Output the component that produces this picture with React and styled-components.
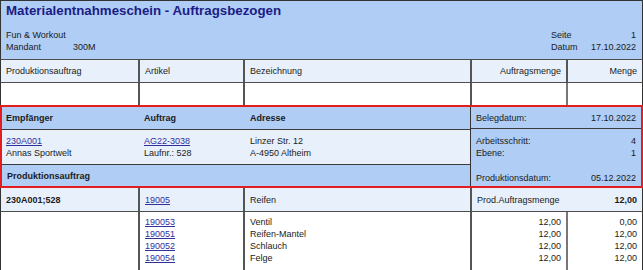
import React from 'react';
import styled, { createGlobalStyle } from 'styled-components';

const GlobalStyle = createGlobalStyle`
  html, body {
    margin: 0;
    padding: 0;
    background: #ffffff;
  }
  * {
    box-sizing: border-box;
  }
`;

const COLS = '139px 105px 227px 96px 74px';

const Sheet = styled.div`
  width: 643px;
  font-family: 'Liberation Sans', Arial, sans-serif;
  font-size: 9px;
  line-height: 12px;
  color: #1b1b1b;
`;

const Header = styled.header`
  height: 59px;
  padding: 2px 6px 0 5px;
  background: #afcdf5;
  border: 1px solid #333;
  border-bottom: none;
`;

const Title = styled.h1`
  margin: 0;
  font-size: 13.3px;
  line-height: 16px;
  font-weight: 700;
  color: #1c1c84;
`;

const InfoRow = styled.div`
  display: flex;
  justify-content: space-between;
  margin-top: 10px;
`;

const InfoGrid = styled.div`
  display: grid;
  grid-template-columns: ${p => p.$cols};
  width: ${p => p.$width || 'auto'};

  & > span:nth-child(2n) {
    text-align: ${p => (p.$alignValue === 'right' ? 'right' : 'left')};
  }
`;

const Row = styled.div`
  display: grid;
  grid-template-columns: ${COLS};
  height: ${p => p.$h}px;
  background: ${p => p.$bg || '#ffffff'};
  border-left: 1px solid #333;
  border-right: 1px solid #333;
  border-top: ${p => (p.$top ? '1px solid #4d4d4d' : 'none')};
  border-bottom: ${p => (p.$bottom ? '1px solid #4d4d4d' : 'none')};
`;

const Cell = styled.div`
  display: flex;
  flex-direction: column;
  justify-content: ${p => (p.$stack ? 'flex-start' : 'center')};
  align-items: ${p => (p.$right ? 'flex-end' : 'flex-start')};
  padding: ${p => (p.$stack ? '4px 5px 0' : '0 5px')};
  border-right: ${p => (p.$line ? `2px solid ${p.$lineColor || '#555'}` : 'none')};
  grid-column: ${p => (p.$span ? `span ${p.$span}` : 'auto')};
  font-weight: ${p => (p.$bold ? 700 : 400)};
`;

const SplitCell = styled(Cell)`
  flex-direction: row;
  justify-content: space-between;
  align-items: center;
`;

const Link = styled.a`
  color: #30309c;
  text-decoration: underline;
`;

const Strong = styled.span`
  font-weight: 700;
`;

/* red framed order block */
const OrderBox = styled.div`
  display: grid;
  grid-template-columns: 469px 1fr;
  height: 83px;
  border: 2px solid #e41e1e;
`;

const OrderLeft = styled.div`
  display: grid;
  grid-template-rows: 23px 35px 1fr;
  border-right: 1px solid #333;
`;

const OrderRow = styled.div`
  display: grid;
  grid-template-columns: 138px 105px 1fr;
  align-items: ${p => (p.$top ? 'start' : 'center')};
  padding-top: ${p => (p.$top ? '5px' : '0')};
  background: ${p => (p.$light ? '#e8f0fc' : '#afcdf5')};
  border-bottom: ${p => (p.$line ? '1px solid #3c3c3c' : 'none')};
  font-weight: ${p => (p.$bold ? 700 : 400)};

  & > div {
    padding-left: 4px;
  }
  & > div:last-child {
    padding-left: 5px;
  }
`;

const OrderRight = styled.div`
  display: grid;
  grid-template-rows: 22px 1fr;
  background: #afcdf5;
`;

const MetaLine = styled.div`
  display: flex;
  justify-content: space-between;
  align-items: center;
  padding: 0 5px 0 5px;
  border-bottom: ${p => (p.$line ? '1px solid #3c3c3c' : 'none')};
`;

const MetaBlock = styled.div`
  display: flex;
  flex-direction: column;
  justify-content: space-between;
  padding: 6px 5px 2px;
`;

const Pair = styled.div`
  display: flex;
  justify-content: space-between;
`;

const items = [
  { nr: '190053', name: 'Ventil', soll: '12,00', ist: '0,00' },
  { nr: '190051', name: 'Reifen-Mantel', soll: '12,00', ist: '12,00' },
  { nr: '190052', name: 'Schlauch', soll: '12,00', ist: '12,00' },
  { nr: '190054', name: 'Felge', soll: '12,00', ist: '12,00' },
];

const App = () => {
  return (
    <Sheet>
      <GlobalStyle />
      <Header>
        <Title>Materialentnahmeschein - Auftragsbezogen</Title>
        <InfoRow>
          <InfoGrid $cols="67px auto">
            <span>Fun &amp; Workout</span>
            <span />
            <span>Mandant</span>
            <span>300M</span>
          </InfoGrid>
          <InfoGrid $cols="1fr auto" $width="85px" $alignValue="right">
            <span>Seite</span>
            <span>1</span>
            <span>Datum</span>
            <span>17.10.2022</span>
          </InfoGrid>
        </InfoRow>
      </Header>

      <Row $h={24} $bg="#e8f0fc" $top $bottom>
        <Cell $line>Produktionsauftrag</Cell>
        <Cell $line>Artikel</Cell>
        <Cell $line>Bezeichnung</Cell>
        <Cell $line $right>Auftragsmenge</Cell>
        <Cell $right>Menge</Cell>
      </Row>
      <Row $h={22}>
        <Cell $line />
        <Cell $line />
        <Cell $line />
        <Cell $line $lineColor="#777" />
        <Cell />
      </Row>

      <OrderBox>
        <OrderLeft>
          <OrderRow $line $bold>
            <div>Empfänger</div>
            <div>Auftrag</div>
            <div>Adresse</div>
          </OrderRow>
          <OrderRow $line $light $top>
            <div>
              <Link href="#">230A001</Link>
              <br />
              Annas Sportwelt
            </div>
            <div>
              <Link href="#">AG22-3038</Link>
              <br />
              Laufnr.: 528
            </div>
            <div>
              Linzer Str. 12
              <br />
              A-4950 Altheim
            </div>
          </OrderRow>
          <OrderRow $bold>
            <div>Produktionsauftrag</div>
          </OrderRow>
        </OrderLeft>
        <OrderRight>
          <MetaLine $line>
            <span>Belegdatum:</span>
            <span>17.10.2022</span>
          </MetaLine>
          <MetaBlock>
            <div>
              <Pair>
                <span>Arbeitsschritt:</span>
                <span>4</span>
              </Pair>
              <Pair>
                <span>Ebene:</span>
                <span>1</span>
              </Pair>
            </div>
            <Pair>
              <span>Produktionsdatum:</span>
              <span>05.12.2022</span>
            </Pair>
          </MetaBlock>
        </OrderRight>
      </OrderBox>

      <Row $h={24} $bg="#e8f0fc" $bottom>
        <Cell $line $bold>230A001;528</Cell>
        <Cell $line>
          <Link href="#">19005</Link>
        </Cell>
        <Cell $line>Reifen</Cell>
        <SplitCell $span={2}>
          <span>Prod.Auftragsmenge</span>
          <Strong>12,00</Strong>
        </SplitCell>
      </Row>

      <Row $h={72}>
        <Cell $line $stack />
        <Cell $line $stack>
          {items.map(item => (
            <Link href="#" key={item.nr}>{item.nr}</Link>
          ))}
        </Cell>
        <Cell $line $stack>
          {items.map(item => (
            <span key={item.nr}>{item.name}</span>
          ))}
        </Cell>
        <Cell $line $stack $right $lineColor="#777">
          {items.map(item => (
            <span key={item.nr}>{item.soll}</span>
          ))}
        </Cell>
        <Cell $stack $right>
          {items.map(item => (
            <span key={item.nr}>{item.ist}</span>
          ))}
        </Cell>
      </Row>
    </Sheet>
  );
};

export default App;
